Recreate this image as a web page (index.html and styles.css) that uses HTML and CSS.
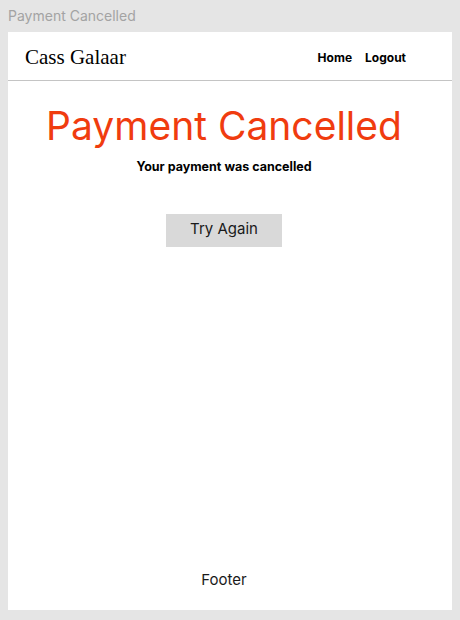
FILE: index.html
```html
<!DOCTYPE html>
<html lang="en">
<head>
<meta charset="utf-8">
<title>Payment Cancelled</title>
<link rel="stylesheet" href="styles.css">
</head>
<body>
<div class="page-title">Payment Cancelled</div>
<div class="frame">
  <header class="header">
    <div class="brand">Cass Galaar</div>
    <nav class="nav">
      <a class="nav-link" href="#">Home</a>
      <a class="nav-link" href="#">Logout</a>
    </nav>
  </header>
  <main class="main">
    <h1 class="heading">Payment Cancelled</h1>
    <p class="subtitle">Your payment was cancelled</p>
    <button class="btn" type="button">Try Again</button>
  </main>
  <footer class="footer">Footer</footer>
</div>
</body>
</html>
```

FILE: styles.css
```css
html, body {
  margin: 0;
  padding: 0;
}
body {
  background: #e5e5e5;
  font-family: Inter, "Noto Sans", sans-serif;
  width: 460px;
  height: 620px;
  padding: 0 8px 10px;
  box-sizing: border-box;
  display: flex;
  flex-direction: column;
}
.page-title {
  height: 32px;
  line-height: 32px;
  font-size: 14px;
  color: #a3a3a3;
}
.frame {
  flex: 1;
  background: #fff;
  display: flex;
  flex-direction: column;
}
.header {
  height: 48px;
  border-bottom: 1px solid #c4c4c4;
  display: flex;
  align-items: center;
  justify-content: space-between;
  padding: 0 46px 0 17px;
}
.brand {
  font-family: "Liberation Serif", "DejaVu Serif", serif;
  font-size: 21px;
  color: #000;
  padding-top: 2px;
}
.nav {
  display: flex;
  gap: 13px;
  padding-top: 2px;
}
.nav-link {
  font-size: 12px;
  font-weight: 700;
  color: #000;
  text-decoration: none;
}
.main {
  flex: 1;
  display: flex;
  flex-direction: column;
  align-items: center;
  padding-right: 12px;
}
.heading {
  margin: 20px 0 0;
  font-size: 39px;
  font-weight: 400;
  line-height: 50px;
  color: #f03c0f;
}
.subtitle {
  margin: 8px 0 0;
  font-size: 12.5px;
  font-weight: 700;
  line-height: 16px;
  color: #000;
}
.btn {
  margin-top: 39px;
  width: 116px;
  height: 33px;
  border: none;
  background: #d9d9d9;
  font-family: Inter, "Noto Sans", sans-serif;
  font-size: 15px;
  color: #1a1a1a;
  padding: 0 0 4px;
}
.footer {
  text-align: center;
  padding-right: 12px;
  font-size: 15px;
  color: #1a1a1a;
  line-height: 20px;
  padding-bottom: 20px;
}
```
